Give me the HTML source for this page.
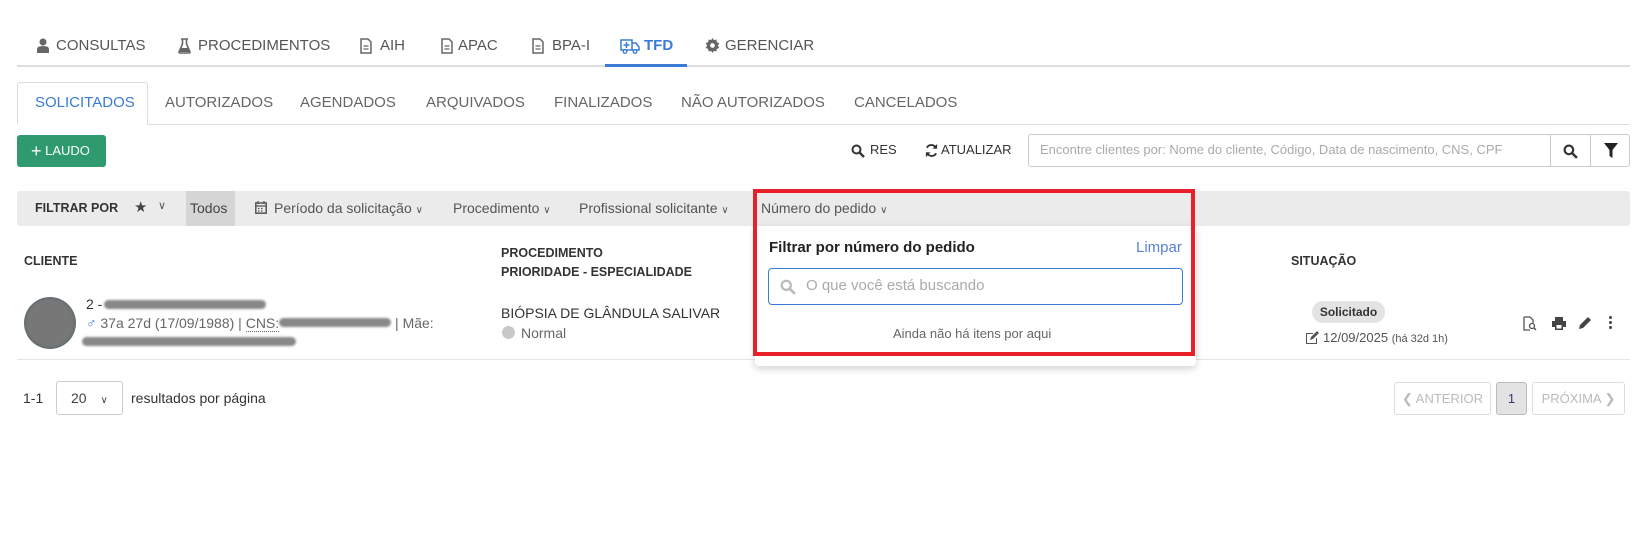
<!DOCTYPE html>
<html><head><meta charset="utf-8"><style>
*{box-sizing:border-box;margin:0;padding:0}
body{width:1645px;height:551px;background:#fff;font-family:"Liberation Sans",sans-serif;color:#444;position:relative;overflow:hidden;font-size:14px}
.a{position:absolute;white-space:nowrap}
.nav{font-size:15px;color:#555;top:37px}
.st{font-size:15px;color:#666;top:94px}
.hd{font-size:12.5px;font-weight:bold;color:#333}
.blur{background:#888;border-radius:6px;height:9px;filter:blur(1px)}
</style></head><body>
<!-- top nav -->
<svg class="a" style="left:36px;top:38px" width="14" height="16" viewBox="0 0 14 16"><circle cx="7" cy="4" r="3.5" fill="#666"/><path d="M1 15v-4q0-3 6-3t6 3v4z" fill="#666"/></svg>
<div class="a nav" style="left:56px">CONSULTAS</div>
<svg class="a" style="left:178px;top:38px" width="13" height="16" viewBox="0 0 13 16"><path d="M3 1h7M4.5 1v5L1 14q0 1 1 1h9q1 0 1-1L8.5 6V1" fill="none" stroke="#666" stroke-width="1.6"/><path d="M3 10h7l2 4H1z" fill="#666"/></svg>
<div class="a nav" style="left:198px">PROCEDIMENTOS</div>
<svg class="a" style="left:360px;top:38px" width="12" height="16" viewBox="0 0 12 16"><path d="M1 1h7l3 3v11H1z" fill="none" stroke="#666" stroke-width="1.5"/><path d="M3.5 8h5M3.5 11h5" stroke="#666" stroke-width="1.3"/></svg>
<div class="a nav" style="left:380px">AIH</div>
<svg class="a" style="left:441px;top:38px" width="12" height="16" viewBox="0 0 12 16"><path d="M1 1h7l3 3v11H1z" fill="none" stroke="#666" stroke-width="1.5"/><path d="M3.5 8h5M3.5 11h5" stroke="#666" stroke-width="1.3"/></svg>
<div class="a nav" style="left:458px">APAC</div>
<svg class="a" style="left:532px;top:38px" width="12" height="16" viewBox="0 0 12 16"><path d="M1 1h7l3 3v11H1z" fill="none" stroke="#666" stroke-width="1.5"/><path d="M3.5 8h5M3.5 11h5" stroke="#666" stroke-width="1.3"/></svg>
<div class="a nav" style="left:552px">BPA-I</div>
<svg class="a" style="left:620px;top:38px" width="20" height="16" viewBox="0 0 20 16"><path d="M1 2h11v10H1zM12 5h4l3 4v3h-7" fill="none" stroke="#3a7bd5" stroke-width="1.5"/><path d="M6.5 4v6M3.5 7h6" stroke="#3a7bd5" stroke-width="1.5"/><circle cx="5" cy="13.5" r="1.8" fill="#fff" stroke="#3a7bd5" stroke-width="1.3"/><circle cx="15" cy="13.5" r="1.8" fill="#fff" stroke="#3a7bd5" stroke-width="1.3"/></svg>
<div class="a nav" style="left:644px;color:#3a7bd5;font-weight:bold">TFD</div>
<svg class="a" style="left:705px;top:38px" width="15" height="15" viewBox="0 0 16 16"><path d="M8 0l1.5 2.3 2.7-.7.4 2.8 2.6 1L13.8 8l1.4 2.6-2.6 1-.4 2.8-2.7-.7L8 16l-1.5-2.3-2.7.7-.4-2.8-2.6-1L2.2 8 .8 5.4l2.6-1 .4-2.8 2.7.7z" fill="#666"/><circle cx="8" cy="8" r="2.5" fill="#fff"/></svg>
<div class="a nav" style="left:725px">GERENCIAR</div>
<div class="a" style="left:17px;top:65px;width:1613px;height:2px;background:#ddd"></div>
<div class="a" style="left:605px;top:64px;width:82px;height:3px;background:#3a7bd5"></div>
<!-- sub tabs -->
<div class="a" style="left:17px;top:82px;width:131px;height:43px;border:1px solid #ddd;border-bottom:1px solid #fff;border-radius:3px 3px 0 0;background:#fff;z-index:2"></div>
<div class="a" style="left:17px;top:124px;width:1613px;height:1px;background:#ddd"></div>
<div class="a st" style="left:35px;color:#3a7bd5;z-index:3">SOLICITADOS</div>
<div class="a st" style="left:165px">AUTORIZADOS</div>
<div class="a st" style="left:300px">AGENDADOS</div>
<div class="a st" style="left:426px">ARQUIVADOS</div>
<div class="a st" style="left:554px">FINALIZADOS</div>
<div class="a st" style="left:681px">NÃO AUTORIZADOS</div>
<div class="a st" style="left:854px">CANCELADOS</div>
<!-- toolbar -->
<div class="a" style="left:17px;top:135px;width:89px;height:32px;background:#2e9a6e;border-radius:3px;color:#fff;font-size:13px;line-height:32px;padding-left:14px"><span style="font-size:18px;vertical-align:-2px">+</span> LAUDO</div>
<svg class="a" style="left:851px;top:144px" width="14" height="14" viewBox="0 0 14 14"><circle cx="5.5" cy="5.5" r="4" fill="none" stroke="#333" stroke-width="2"/><path d="M8.5 8.5l4.5 4.5" stroke="#333" stroke-width="2.3"/></svg>
<div class="a" style="left:870px;top:142px;font-size:13px;color:#333">RES</div>
<svg class="a" style="left:924px;top:143px" width="15" height="15" viewBox="0 0 16 16"><path d="M13 6A5.5 5.5 0 0 0 3 5M3 10a5.5 5.5 0 0 0 10 1" fill="none" stroke="#333" stroke-width="2"/><path d="M14 1v5h-5zM2 15v-5h5z" fill="#333"/></svg>
<div class="a" style="left:941px;top:142px;font-size:13px;color:#333">ATUALIZAR</div>
<div class="a" style="left:1028px;top:134px;width:602px;height:33px;border:1px solid #ccc;border-radius:3px"></div>
<div class="a" style="left:1040px;top:142px;font-size:13px;color:#aaa">Encontre clientes por: Nome do cliente, Código, Data de nascimento, CNS, CPF</div>
<div class="a" style="left:1550px;top:134px;width:1px;height:33px;background:#ccc"></div>
<div class="a" style="left:1590px;top:134px;width:1px;height:33px;background:#ccc"></div>
<svg class="a" style="left:1563px;top:144px" width="15" height="15" viewBox="0 0 14 14"><circle cx="5.5" cy="5.5" r="4" fill="none" stroke="#333" stroke-width="2"/><path d="M8.5 8.5l4.5 4.5" stroke="#333" stroke-width="2.3"/></svg>
<svg class="a" style="left:1604px;top:143px" width="14" height="15" viewBox="0 0 14 15"><path d="M0 0h14L8.5 7v8l-3-2V7z" fill="#222"/></svg>
<!-- filter bar -->
<div class="a" style="left:17px;top:191px;width:1613px;height:35px;background:#ebebeb;border-radius:3px"></div>
<div class="a" style="left:186px;top:191px;width:49px;height:35px;background:#d5d5d5"></div>
<div class="a" style="left:35px;top:201px;font-size:12.5px;font-weight:bold;color:#333">FILTRAR POR</div>
<div class="a" style="left:134px;top:198px;font-size:15px;color:#444">★</div>
<div class="a" style="left:158px;top:199px;font-size:11px;color:#555">∨</div>
<div class="a" style="left:190px;top:200px;font-size:14px;color:#444">Todos</div>
<svg class="a" style="left:255px;top:201px" width="12" height="13" viewBox="0 0 12 13"><rect x="0.8" y="2" width="10.4" height="10.2" fill="none" stroke="#555" stroke-width="1.5"/><path d="M3 0v3M9 0v3M1 5h10M3 7.5h1.5M6 7.5h1.5M3 10h1.5M6 10h1.5" stroke="#555" stroke-width="1.3"/></svg>
<div class="a" style="left:274px;top:200px;font-size:14px;color:#555">Período da solicitação <span style="font-size:10px">∨</span></div>
<div class="a" style="left:453px;top:200px;font-size:14px;color:#555">Procedimento <span style="font-size:10px">∨</span></div>
<div class="a" style="left:579px;top:200px;font-size:14px;color:#555">Profissional solicitante <span style="font-size:10px">∨</span></div>
<div class="a" style="left:761px;top:200px;font-size:14px;color:#555">Número do pedido <span style="font-size:10px">∨</span></div>
<!-- headers -->
<div class="a hd" style="left:24px;top:254px">CLIENTE</div>
<div class="a hd" style="left:501px;top:246px">PROCEDIMENTO</div>
<div class="a hd" style="left:501px;top:265px">PRIORIDADE - ESPECIALIDADE</div>
<div class="a hd" style="left:1291px;top:254px">SITUAÇÃO</div>
<!-- row -->
<div class="a" style="left:24px;top:297px;width:52px;height:52px;border-radius:50%;background:radial-gradient(circle,#777 60%,#5a6a70 75%,#222 100%)"></div>
<div class="a" style="left:86px;top:296px;font-size:14px;color:#333">2 -</div>
<div class="a blur" style="left:104px;top:300px;width:162px"></div>
<div class="a" style="left:86px;top:315px;font-size:14px;color:#666"><span style="color:#3a7bd5">♂</span> 37a 27d (17/09/1988) | <span style="border-bottom:1px dotted #666">CNS:</span><span style="display:inline-block;width:112px;height:9px;background:#888;border-radius:6px;filter:blur(1px);vertical-align:1px"></span> | Mãe:</div>
<div class="a blur" style="left:82px;top:337px;width:214px"></div>
<div class="a" style="left:501px;top:305px;font-size:14px;color:#333">BIÓPSIA DE GLÂNDULA SALIVAR</div>
<div class="a" style="left:502px;top:326px;width:13px;height:13px;border-radius:50%;background:#c8c8c8"></div>
<div class="a" style="left:521px;top:325px;font-size:14px;color:#666">Normal</div>
<div class="a" style="left:1312px;top:301px;width:73px;height:22px;border-radius:11px;background:#e3e3e3;font-size:12px;font-weight:bold;color:#333;line-height:22px;text-align:center">Solicitado</div>
<svg class="a" style="left:1306px;top:331px" width="14" height="13" viewBox="0 0 14 13"><path d="M1 3h6v-1H0v11h11V7h-1v5H1z" fill="#555"/><path d="M4 9l1-3 6-6 2 2-6 6z" fill="#555"/></svg>
<div class="a" style="left:1323px;top:330px;font-size:13px;color:#555">12/09/2025 <span style="font-size:11px">(há 32d 1h)</span></div>
<svg class="a" style="left:1523px;top:316px" width="14" height="15" viewBox="0 0 14 15"><path d="M1 1h6l3 3v3M1 1v13h6" fill="none" stroke="#555" stroke-width="1.3"/><circle cx="9" cy="10" r="2.5" fill="none" stroke="#555" stroke-width="1.3"/><path d="M11 12l2 2" stroke="#555" stroke-width="1.5"/></svg>
<svg class="a" style="left:1552px;top:317px" width="14" height="13" viewBox="0 0 14 13"><path d="M3 0h8v4H3z M0 4h14v6h-3v3H3v-3H0z" fill="#444"/><rect x="4.5" y="8" width="5" height="3.5" fill="#fff"/></svg>
<svg class="a" style="left:1579px;top:316px" width="13" height="13" viewBox="0 0 13 13"><path d="M0 13l1-4 8-8 3 3-8 8z" fill="#444"/></svg>
<div class="a" style="left:1609px;top:316px;width:3px;height:3px;background:#444;border-radius:50%;box-shadow:0 5px #444,0 10px #444"></div>
<div class="a" style="left:17px;top:359px;width:1613px;height:1px;background:#e5e5e5"></div>
<!-- pagination -->
<div class="a" style="left:23px;top:390px;font-size:14px;color:#333">1-1</div>
<div class="a" style="left:56px;top:381px;width:67px;height:34px;border:1px solid #ccc;border-radius:3px;font-size:14px;color:#444;line-height:32px;padding-left:14px">20 <span style="font-size:10px;margin-left:10px">∨</span></div>
<div class="a" style="left:131px;top:390px;font-size:14px;color:#333">resultados por página</div>
<div class="a" style="left:1394px;top:382px;width:97px;height:33px;border:1px solid #ddd;border-radius:3px;font-size:13px;color:#bbb;line-height:31px;text-align:center">❮ ANTERIOR</div>
<div class="a" style="left:1496px;top:382px;width:31px;height:33px;border:1px solid #bbb;border-radius:3px;background:#e3e3e3;font-size:13px;color:#4a2a7a;line-height:31px;text-align:center">1</div>
<div class="a" style="left:1532px;top:382px;width:93px;height:33px;border:1px solid #ddd;border-radius:3px;font-size:13px;color:#bbb;line-height:31px;text-align:center">PRÓXIMA ❯</div>
<!-- dropdown -->
<div class="a" style="left:755px;top:226px;width:441px;height:140px;background:#fff;box-shadow:0 3px 8px rgba(0,0,0,.18);border-radius:0 0 4px 4px;z-index:5"></div>
<div class="a" style="left:769px;top:239px;font-size:15px;font-weight:bold;color:#222;z-index:6">Filtrar por número do pedido</div>
<div class="a" style="left:1136px;top:239px;font-size:15px;color:#5b7fd6;z-index:6">Limpar</div>
<div class="a" style="left:768px;top:268px;width:415px;height:37px;border:1px solid #3a7bd5;border-radius:4px;z-index:6"></div>
<svg class="a" style="left:780px;top:279px;z-index:6" width="16" height="16" viewBox="0 0 14 14"><circle cx="5.5" cy="5.5" r="4" fill="none" stroke="#bbb" stroke-width="2"/><path d="M8.5 8.5l4.5 4.5" stroke="#bbb" stroke-width="2.3"/></svg>
<div class="a" style="left:806px;top:277px;font-size:15px;color:#aaa;z-index:6">O que você está buscando</div>
<div class="a" style="left:893px;top:326px;font-size:13px;color:#666;z-index:6">Ainda não há itens por aqui</div>
<div class="a" style="left:753px;top:189px;width:442px;height:167px;border:4px solid #e8202a;z-index:7"></div>
</body></html>
